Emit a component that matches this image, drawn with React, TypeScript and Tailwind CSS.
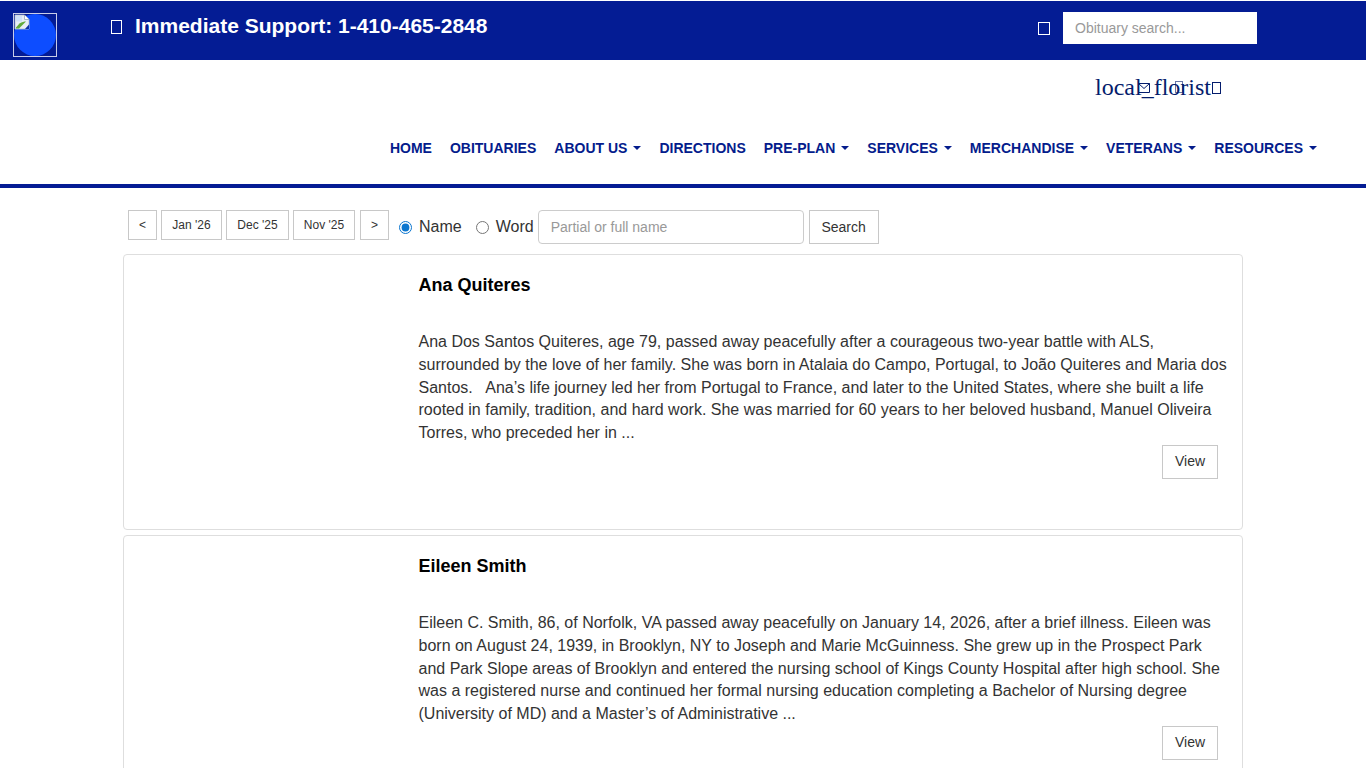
const NAVY = "text-[#041c8c]";

function Tofu({ cls = "" }: { cls?: string }) {
  return <span className={`inline-block border border-current ${cls}`} />;
}

function BrokenImage() {
  return (
    <svg width="16" height="16" viewBox="0 0 16 16" className="absolute left-0 top-0">
      <path d="M1 1h9.5L15 5.5V15H1z" fill="#e8eef6" stroke="#b5bfcc" strokeWidth="0.8" />
      <path d="M10.5 1v4.5H15" fill="#fff" stroke="#9aa6b8" strokeWidth="0.8" />
      <path d="M2 13.5 L5.5 9.5 C8 8 10 7.5 12 7.5 L5 14.5 H2z" fill="#62ab3c" />
      <path d="M2 2h6v5.5H2z" fill="#cfe0f8" />
      <path d="M11 15 L15 10.5 V15z" fill="#0d2fa8" />
    </svg>
  );
}

function Caret() {
  return <span className="inline-block ml-[6px] align-[3px] w-0 h-0 border-t-[4px] border-x-[4px] border-x-transparent border-t-[#041c8c]" />;
}

function NavItem({ label, caret }: { label: string; caret?: boolean }) {
  return (
    <a className={`${NAVY} text-[14px] font-bold whitespace-nowrap`}>
      {label}
      {caret && <Caret />}
    </a>
  );
}

function PageBtn({ children, w }: { children: React.ReactNode; w: string }) {
  return (
    <button className={`${w} h-[30px] border border-[#c8c8c8] bg-white text-[12px] text-[#333] flex items-center justify-center`}>
      {children}
    </button>
  );
}

function Card({ name, lines }: { name: string; lines: string[] }) {
  return (
    <div className="h-[276px] w-[1120px] border border-[#dedede] rounded-[4px] bg-white pl-[294.5px] pr-[14px] pt-[17px] shrink-0">
      <h2 className="text-[18px] leading-[26px] font-bold text-black">{name}</h2>
      <div className="mt-[33px] text-[16px] leading-[22.8px] text-[#333]">
        {lines.map((l) => (
          <div key={l} className="whitespace-pre">{l}</div>
        ))}
      </div>
      <div className="flex justify-end pr-[10px]">
        <button className="w-[56px] h-[34px] border border-[#c8c8c8] bg-white text-[14px] text-[#333]">View</button>
      </div>
    </div>
  );
}

export default function App() {
  return (
    <div className="relative h-[768px] overflow-hidden bg-white font-['Liberation_Sans',Arial,sans-serif]">
      <header className="mt-px h-[59px] bg-[#041c94] flex text-white">
        <div className="relative w-[44px] h-[44px] ml-[13px] mt-[12px] border border-[#c9cde8] shrink-0">
          <div className="w-[42px] h-[42px] rounded-full bg-[#0d4dff]" />
          <BrokenImage />
        </div>
        <div className="ml-[54px] mt-[13px] flex items-start gap-[13px]">
          <Tofu cls="mt-[6px] w-[11px] h-[14px]" />
          <span className="text-[21px] leading-[24px] font-bold whitespace-nowrap">Immediate Support: 1-410-465-2848</span>
        </div>
        <div className="ml-auto mr-[109px] mt-[11px] flex items-start">
          <Tofu cls="mt-[10px] mr-[13px] w-[12px] h-[13px]" />
          <input
            readOnly
            placeholder="Obituary search..."
            className="w-[194px] h-[32px] bg-white px-[12px] text-[14px] text-[#333] placeholder:text-[#999] outline-none"
          />
        </div>
      </header>

      <div className="h-[55px] flex justify-end pr-[155px] pt-[13px]">
        <div className="relative text-[24px] leading-[28px] text-[#041c6c] font-['Liberation_Serif',serif] whitespace-nowrap">
          local_florist
          <svg width="14" height="12" viewBox="0 0 14 12" fill="none" stroke="currentColor" className="absolute left-[42px] top-[9px]">
            <path d="M1.5 1.5h11v9h-11z M1.5 1.5l5.5 5 5.5-5" />
          </svg>
          <Tofu cls="absolute left-[80px] top-[8px] w-[8px] h-[12px] opacity-60" />
          <Tofu cls="absolute left-[117px] top-[9px] w-[9px] h-[12px]" />
        </div>
      </div>

      <nav className="h-[73px] border-b-4 border-[#041c94] flex justify-end gap-[18px] pr-[49px] pt-[25px] leading-[16px]">
        <NavItem label="HOME" />
        <NavItem label="OBITUARIES" />
        <NavItem label="ABOUT US" caret />
        <NavItem label="DIRECTIONS" />
        <NavItem label="PRE-PLAN" caret />
        <NavItem label="SERVICES" caret />
        <NavItem label="MERCHANDISE" caret />
        <NavItem label="VETERANS" caret />
        <NavItem label="RESOURCES" caret />
      </nav>

      <main className="pl-[123px] pt-[22px]">
        <div className="ml-[5px] flex items-start gap-[4px] h-[34px]">
          <PageBtn w="w-[29px]">&lt;</PageBtn>
          <PageBtn w="w-[61px]">Jan '26</PageBtn>
          <PageBtn w="w-[63px]">Dec '25</PageBtn>
          <PageBtn w="w-[62px]">Nov '25</PageBtn>
          <span className="ml-px">
            <PageBtn w="w-[29px]">&gt;</PageBtn>
          </span>
          <label className="ml-[6px] h-[34px] flex items-center text-[16px] text-[#333]">
            <input type="radio" name="m" defaultChecked className="w-[13px] h-[13px] m-0 mr-[7px] accent-[#0b76cf]" />
            Name
          </label>
          <label className="ml-[10px] h-[34px] flex items-center text-[16px] text-[#333]">
            <input type="radio" name="m" className="w-[13px] h-[13px] m-0 mr-[7px]" />
            Word
          </label>
          <input
            readOnly
            placeholder="Partial or full name"
            className="w-[266px] h-[34px] border border-[#ccc] rounded-[4px] px-[12px] text-[14px] placeholder:text-[#999] outline-none"
          />
          <button className="ml-px w-[70px] h-[34px] border border-[#c8c8c8] bg-white text-[14px] text-[#333]">Search</button>
        </div>
        <div className="mt-[10px] flex flex-col gap-[5px]">
          <Card
            name="Ana Quiteres"
            lines={[
              "Ana Dos Santos Quiteres, age 79, passed away peacefully after a courageous two-year battle with ALS,",
              "surrounded by the love of her family. She was born in Atalaia do Campo, Portugal, to João Quiteres and Maria dos",
              "Santos.   Ana’s life journey led her from Portugal to France, and later to the United States, where she built a life",
              "rooted in family, tradition, and hard work. She was married for 60 years to her beloved husband, Manuel Oliveira",
              "Torres, who preceded her in ...",
            ]}
          />
          <Card
            name="Eileen Smith"
            lines={[
              "Eileen C. Smith, 86, of Norfolk, VA passed away peacefully on January 14, 2026, after a brief illness. Eileen was",
              "born on August 24, 1939, in Brooklyn, NY to Joseph and Marie McGuinness. She grew up in the Prospect Park",
              "and Park Slope areas of Brooklyn and entered the nursing school of Kings County Hospital after high school. She",
              "was a registered nurse and continued her formal nursing education completing a Bachelor of Nursing degree",
              "(University of MD) and a Master’s of Administrative ...",
            ]}
          />
        </div>
      </main>
    </div>
  );
}
